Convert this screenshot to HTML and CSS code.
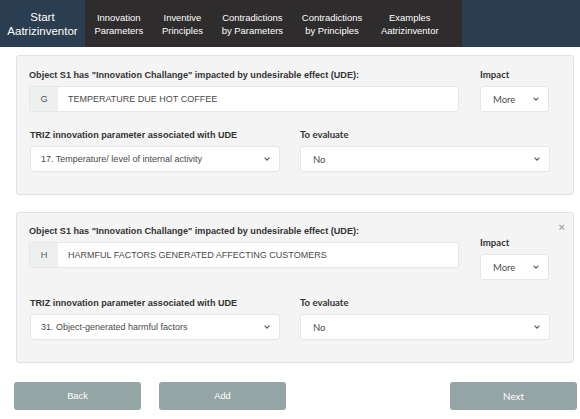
FILE: index.html
```html
<!DOCTYPE html>
<html lang="en">
<head>
<meta charset="utf-8">
<title>Aatrizinventor</title>
<link rel="stylesheet" href="styles.css">
</head>
<body>
<nav class="topbar">
  <div class="brand">Start<br>Aatrizinventor</div>
  <ul class="menu">
    <li>Innovation<br>Parameters</li>
    <li>Inventive<br>Principles</li>
    <li>Contradictions<br>by Parameters</li>
    <li>Contradictions<br>by Principles</li>
    <li>Examples<br>Aatrizinventor</li>
  </ul>
</nav>

<main class="content">
  <section class="card">
    <div class="row-top">
      <div class="col-main">
        <div class="field-label">Object S1 has "Innovation Challange" impacted by undesirable effect (UDE):</div>
        <div class="input-group">
          <span class="addon">G</span>
          <span class="input-text">TEMPERATURE DUE HOT COFFEE</span>
        </div>
      </div>
      <div class="col-impact">
        <div class="field-label alt">Impact</div>
        <div class="select select-impact"><span>More</span><svg class="chev" width="6" height="4" viewBox="0 0 6 4"><path d="M0.6 0.7 L3 3.1 L5.4 0.7" fill="none" stroke="#555" stroke-width="1.1"/></svg></div>
      </div>
    </div>
    <div class="row-bottom">
      <div>
        <div class="field-label">TRIZ innovation parameter associated with UDE</div>
        <div class="select"><span>17. Temperature/ level of internal activity</span><svg class="chev" width="6" height="4" viewBox="0 0 6 4"><path d="M0.6 0.7 L3 3.1 L5.4 0.7" fill="none" stroke="#555" stroke-width="1.1"/></svg></div>
      </div>
      <div>
        <div class="field-label alt">To evaluate</div>
        <div class="select select-eval"><span>No</span><svg class="chev" width="6" height="4" viewBox="0 0 6 4"><path d="M0.6 0.7 L3 3.1 L5.4 0.7" fill="none" stroke="#555" stroke-width="1.1"/></svg></div>
      </div>
    </div>
  </section>

  <section class="card card-closable">
    <span class="close">&times;</span>
    <div class="row-top">
      <div class="col-main">
        <div class="field-label">Object S1 has "Innovation Challange" impacted by undesirable effect (UDE):</div>
        <div class="input-group">
          <span class="addon">H</span>
          <span class="input-text">HARMFUL FACTORS GENERATED AFFECTING CUSTOMERS</span>
        </div>
      </div>
      <div class="col-impact shifted">
        <div class="field-label alt">Impact</div>
        <div class="select select-impact"><span>More</span><svg class="chev" width="6" height="4" viewBox="0 0 6 4"><path d="M0.6 0.7 L3 3.1 L5.4 0.7" fill="none" stroke="#555" stroke-width="1.1"/></svg></div>
      </div>
    </div>
    <div class="row-bottom">
      <div>
        <div class="field-label">TRIZ innovation parameter associated with UDE</div>
        <div class="select"><span>31. Object-generated harmful factors</span><svg class="chev" width="6" height="4" viewBox="0 0 6 4"><path d="M0.6 0.7 L3 3.1 L5.4 0.7" fill="none" stroke="#555" stroke-width="1.1"/></svg></div>
      </div>
      <div>
        <div class="field-label alt">To evaluate</div>
        <div class="select select-eval"><span>No</span><svg class="chev" width="6" height="4" viewBox="0 0 6 4"><path d="M0.6 0.7 L3 3.1 L5.4 0.7" fill="none" stroke="#555" stroke-width="1.1"/></svg></div>
      </div>
    </div>
  </section>
</main>

<div class="actions">
  <button class="btn">Back</button>
  <button class="btn">Add</button>
  <button class="btn btn-next">Next</button>
</div>
</body>
</html>
```

FILE: styles.css
```css
* { box-sizing: border-box; }

html, body {
  margin: 0;
  padding: 0;
  background: #ffffff;
}

body {
  font-family: "Liberation Sans", Arial, sans-serif;
  color: #333333;
  width: 580px;
  height: 419px;
  overflow: hidden;
}

/* ---------- top bar ---------- */
.topbar {
  display: flex;
  height: 47px;
  background: #2b3d50;
}

.brand {
  width: 85px;
  display: flex;
  align-items: center;
  justify-content: center;
  text-align: center;
  color: #ffffff;
  font-size: 11.5px;
  line-height: 14px;
  padding-top: 1px;
}

.menu {
  list-style: none;
  margin: 0;
  padding: 0 14px 0 0;
  display: flex;
  background: #2e2c2c;
}

.menu li {
  padding: 0 9.4px;
  display: flex;
  align-items: center;
  text-align: center;
  color: #ffffff;
  font-size: 9.45px;
  line-height: 13px;
}

/* ---------- cards ---------- */
.content {
  padding: 8px 6px 0 16px;
  display: flex;
  flex-direction: column;
  gap: 17px;
}

.card {
  position: relative;
  background: #f4f4f4;
  border: 1px solid #e2e2e2;
  border-radius: 3px;
  padding: 13px 24px 22px 12px;
}

.card-closable {
  padding-top: 12px;
}

.close {
  position: absolute;
  top: 9px;
  right: 8px;
  font-size: 11px;
  line-height: 10px;
  color: #a9a9a9;
  font-weight: bold;
}

.row-top {
  display: flex;
  gap: 21px;
  align-items: flex-start;
}

.col-main { width: 430px; }
.col-impact { width: 69px; }
.col-impact.shifted { padding-top: 12px; }

.row-bottom {
  display: grid;
  grid-template-columns: 250px 250px;
  column-gap: 20px;
  margin-top: 17px;
  padding-left: 1px;
}

.field-label {
  font-weight: bold;
  font-size: 9.1px;
  line-height: 12px;
  margin-bottom: 5px;
  color: #333333;
  white-space: nowrap;
}

.field-label.alt {
  font-family: Lato, "Liberation Sans", sans-serif;
  font-size: 9.6px;
}

.input-group {
  display: flex;
  height: 26px;
  border: 1px solid #e6e6e6;
  border-radius: 3px;
  background: #ffffff;
  overflow: hidden;
}

.addon {
  width: 28px;
  display: flex;
  align-items: center;
  justify-content: center;
  background: #eef0f0;
  color: #555555;
  font-size: 9.2px;
}

.input-text {
  display: flex;
  align-items: center;
  padding-left: 10px;
  color: #4a4a4a;
  font-size: 9px;
}

.select {
  height: 26px;
  background: #ffffff;
  border: 1px solid #e6e6e6;
  border-radius: 3px;
  display: flex;
  align-items: center;
  justify-content: space-between;
  padding: 0 9px 0 10px;
  font-size: 9px;
  color: #4a4a4a;
}

.select-impact,
.select-eval {
  padding-left: 12px;
  font-family: Lato, "Liberation Sans", sans-serif;
  font-size: 9.5px;
}

.chev { flex: none; }

/* ---------- buttons ---------- */
.actions {
  display: flex;
  gap: 18px;
  padding: 19px 3px 0 14px;
}

.btn {
  width: 127px;
  height: 28px;
  border: none;
  border-radius: 3px;
  background: #95a5a5;
  color: #ffffff;
  font-family: "Liberation Sans", Arial, sans-serif;
  font-size: 9.3px;
  padding: 0;
}

.btn-next {
  margin-left: auto;
  font-family: Lato, "Liberation Sans", sans-serif;
  font-size: 9.8px;
}
```
